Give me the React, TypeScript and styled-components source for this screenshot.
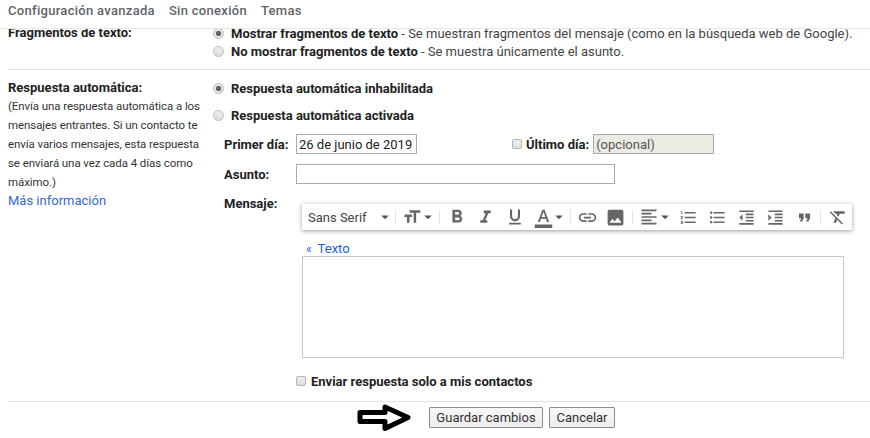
import React from "react";
import styled, { createGlobalStyle } from "styled-components";
import {
  MdFormatBold, MdFormatItalic, MdFormatUnderlined, MdFormatColorText, MdLink, MdInsertPhoto,
  MdFormatAlignLeft, MdFormatListNumbered, MdFormatListBulleted, MdFormatIndentDecrease,
  MdFormatIndentIncrease, MdFormatQuote, MdFormatClear, MdFormatSize, MdArrowDropDown,
} from "react-icons/md";

const Global = createGlobalStyle`
  html, body { margin: 0; padding: 0; background: #fff; }
  body { font-family: Roboto, "Liberation Sans", Arial, sans-serif; font-size: 13px; color: #222; width: 870px; height: 438px; overflow: hidden; }
  * { box-sizing: border-box; }
`;
const Page = styled.div`width: 870px; height: 438px; overflow: hidden; display: flex; flex-direction: column;`;
const Nav = styled.nav`
  position: relative; z-index: 1; flex: none; height: 29px; background: #fff; border-bottom: 1px solid #e8e8e8;
  display: flex; gap: 14px; padding: 3px 8px 0; font-size: 13px; letter-spacing: .3px; line-height: 16px; color: #5f6368; font-weight: 500;
`;
const Content = styled.div`margin: 0 0 0 8px; width: 862px; flex: 1;`;
const Section = styled.section`display: grid; grid-template-columns: 205px 1fr; border-bottom: 1px solid #e2e2e2;`;
const FirstSection = styled(Section)`margin-top: -5px; height: 46px; width: 862px;`;
const SecondSection = styled(Section)`height: 332px; padding-top: 9px;`;
const Heading = styled.div`font-weight: 700; font-size: 13px; line-height: 18px; color: #222;`;
const Help = styled.div`font-size: 11.5px; line-height: 19px; color: #333; white-space: nowrap; letter-spacing: -.08px;`;
const MoreLink = styled.a`display: block; color: #3367d6; font-size: 13px; line-height: 18px;`;
const RightCol = styled.div`display: flex; flex-direction: column; min-width: 0;`;
const OptionRow = styled.label<{ $h: number }>`display: flex; align-items: center; height: ${p => p.$h}px; white-space: nowrap;`;
const Radio = styled.input`
  appearance: none; width: 11px; height: 11px; margin: 0 7px 0 0; border-radius: 50%; flex: none;
  border: 1px solid #bcbcbc; background: linear-gradient(#ededed, #dcdcdc);
  &:checked { background: radial-gradient(circle, #666 0 2.4px, #e6e6e6 3px); }
`;
const Strong = styled.b`font-weight: 700; color: #222;`;
const Muted = styled.span`color: #444;`;
const Indented = styled.div`padding: 1px 0 0 11px; display: flex; flex-direction: column;`;
const FormRow = styled.div<{ $h: number; $gap?: number }>`display: flex; align-items: center; height: ${p => p.$h}px; margin-top: ${p => p.$gap ?? 0}px;`;
const FieldLabel = styled.div`width: 72px; flex: none; font-weight: 700; color: #222;`;
const TextInput = styled.input<{ $w: number; $off?: boolean }>`
  width: ${p => p.$w}px; height: 20px; border: 1px solid #a9a9a9; padding: 0 2px; font: 13px Roboto, sans-serif; color: #222;
  background: ${p => (p.$off ? "#ebebe4" : "#fff")}; border-radius: 0; outline: none;
  &:disabled { color: #555; }
`;
const Check = styled.input`
  appearance: none; width: 10px; height: 10px; margin: 0; flex: none; border: 1px solid #b5b5b5; border-radius: 2px; background: linear-gradient(#f0f0f0, #dedede);
`;
const LastDay = styled.div`display: flex; align-items: center; gap: 4px; margin-left: 95px;`;
const LastDayLabel = styled.span`font-weight: 700; color: #222;`;
const MessageRow = styled.div`display: flex; align-items: flex-start; margin-top: 20px;`;
const MessageLabel = styled(FieldLabel)`width: 77px; line-height: 18px; margin-top: -9px;`;
const Editor = styled.div`display: flex; flex-direction: column; margin-left: 1px;`;
const Toolbar = styled.div`
  width: 550px; height: 26px; background: #fff; box-shadow: 0 1px 4px rgba(0,0,0,.4); border-radius: 1px; display: flex; align-items: center; color: #666; padding-left: 6px;
`;
const FontName = styled.span`color: #444; width: 68px; font-size: 13px; white-space: nowrap;`;
const Sep = styled.span<{ $l: number; $r: number }>`width: 1px; height: 15px; background: #e4e4e4; flex: none; margin: 0 ${p => p.$r}px 0 ${p => p.$l}px;`;
const Btn = styled.span<{ $w?: number }>`display: inline-flex; align-items: center; justify-content: center; width: ${p => p.$w ?? 29}px; flex: none; color: #666;`;
const Caret = styled.span<{ $l?: number }>`display: inline-flex; margin-left: ${p => p.$l ?? 0}px; color: #555;`;
const TextToggle = styled.a`display: block; margin: 12px 0 0 4px; height: 14px; line-height: 14px; color: #1a62dc;`;
const Chev = styled.span`margin-right: 3px; font-size: 12px;`;
const Body = styled.div`width: 542px; height: 102px; border: 1px solid #c8c8c8;`;
const ContactRow = styled.label`display: flex; align-items: center; gap: 5px; margin: 16px 0 0 -6px; height: 14px; font-weight: 700; color: #222;`;
const Footer = styled.div`display: flex; align-items: center; padding-left: 349px; height: 30px;`;
const Arrow = styled.svg`width: 56px; height: 28px; flex: none; margin-right: 16px; margin-top: 1px;`;
const Button = styled.button<{ $w: number }>`
  width: ${p => p.$w}px; height: 21px; margin-right: 6px; border: 1px solid #8a8a8a; border-radius: 1px; background: linear-gradient(#f8f8f8, #ececec); padding: 0;
  font: 13px Roboto, sans-serif; color: #333;
`;

const I = (C: React.ComponentType<{ size?: number }>, w = 29, size = 19) => <Btn $w={w}><C size={size} /></Btn>;
const Down = ({ l }: { l?: number }) => <Caret $l={l}><MdArrowDropDown size={18} /></Caret>;

export default function App() {
  return (
    <Page>
      <Global />
      <Nav><span>Configuración avanzada</span><span>Sin conexión</span><span>Temas</span></Nav>
      <Content>
        <FirstSection>
          <Heading>Fragmentos de texto:</Heading>
          <RightCol>
            <OptionRow $h={18}>
              <Radio type="radio" name="a" defaultChecked />
              <span><Strong>Mostrar fragmentos de texto</Strong><Muted> - Se muestran fragmentos del mensaje (como en la búsqueda web de Google).</Muted></span>
            </OptionRow>
            <OptionRow $h={18}>
              <Radio type="radio" name="a" />
              <span><Strong>No mostrar fragmentos de texto</Strong><Muted> - Se muestra únicamente el asunto.</Muted></span>
            </OptionRow>
          </RightCol>
        </FirstSection>
        <SecondSection>
          <div>
            <Heading>Respuesta automática:</Heading>
            <Help>(Envía una respuesta automática a los<br />mensajes entrantes. Si un contacto te<br />envía varios mensajes, esta respuesta<br />se enviará una vez cada 4 días como<br />máximo.)</Help>
            <MoreLink>Más información</MoreLink>
          </div>
          <RightCol>
            <OptionRow $h={18}>
              <Radio type="radio" name="b" defaultChecked />
              <Strong>Respuesta automática inhabilitada</Strong>
            </OptionRow>
            <OptionRow $h={36}>
              <Radio type="radio" name="b" />
              <Strong>Respuesta automática activada</Strong>
            </OptionRow>
            <Indented>
              <FormRow $h={20}>
                <FieldLabel>Primer día:</FieldLabel>
                <TextInput $w={121} defaultValue="26 de junio de 2019" />
                <LastDay>
                  <Check type="checkbox" />
                  <LastDayLabel>Último día:</LastDayLabel>
                  <TextInput $w={121} $off disabled defaultValue="(opcional)" />
                </LastDay>
              </FormRow>
              <FormRow $h={20} $gap={10}>
                <FieldLabel>Asunto:</FieldLabel>
                <TextInput $w={319} />
              </FormRow>
              <MessageRow>
                <MessageLabel>Mensaje:</MessageLabel>
                <Editor>
                  <Toolbar>
                    <FontName>Sans Serif</FontName><Down />
                    <Sep $l={1} $r={4} />
                    {I(MdFormatSize, 24, 20)}<Down l={-5} />
                    <Sep $l={2} $r={2} />
                    {I(MdFormatBold, 29, 22)}{I(MdFormatItalic, 29, 21)}{I(MdFormatUnderlined, 29, 20)}{I(MdFormatColorText, 29, 21)}
                    <Down l={-8} />
                    <Sep $l={2} $r={2} />
                    {I(MdLink, 28, 21)}{I(MdInsertPhoto, 28, 21)}
                    <Sep $l={3} $r={3} />
                    {I(MdFormatAlignLeft, 26, 20)}<Down l={-6} />
                    {I(MdFormatListNumbered)}{I(MdFormatListBulleted)}{I(MdFormatIndentDecrease)}{I(MdFormatIndentIncrease)}{I(MdFormatQuote)}
                    <Sep $l={1} $r={4} />
                    {I(MdFormatClear, 26, 20)}
                  </Toolbar>
                  <TextToggle><Chev>«</Chev> Texto</TextToggle>
                  <Body />
                  <ContactRow><Check type="checkbox" />Enviar respuesta solo a mis contactos</ContactRow>
                </Editor>
              </MessageRow>
            </Indented>
          </RightCol>
        </SecondSection>
        <Footer>
          <Arrow viewBox="0 0 56 28"><path d="M3 8.5 H28 V3 L51 13.5 L28 24.5 V17.5 H3 Z" fill="#fff" stroke="#000" strokeWidth="5" strokeLinejoin="round" /></Arrow>
          <Button $w={114}>Guardar cambios</Button>
          <Button $w={66}>Cancelar</Button>
        </Footer>
      </Content>
    </Page>
  );
}
